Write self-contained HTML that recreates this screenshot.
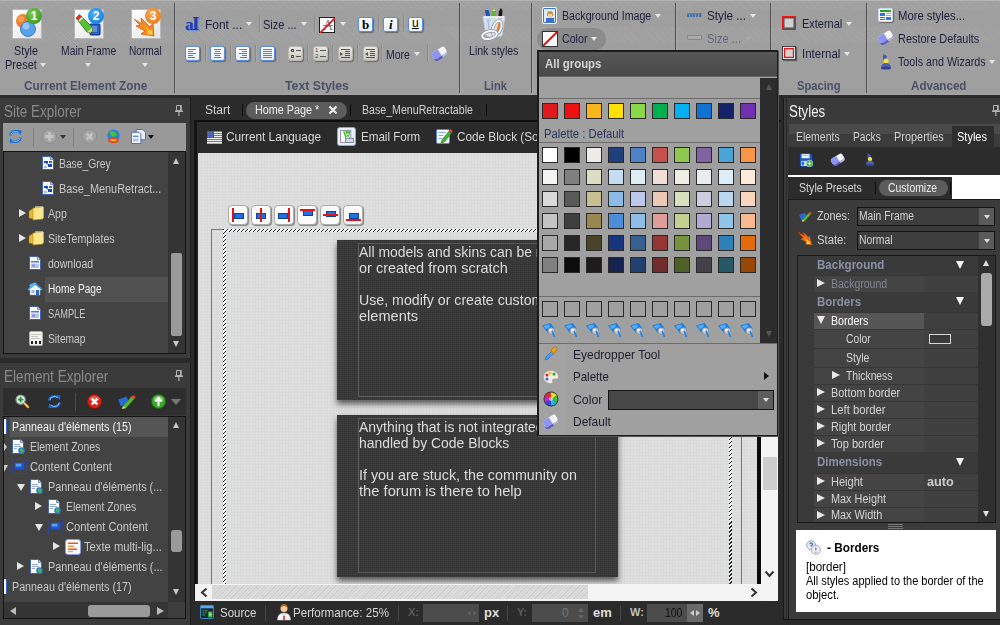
<!DOCTYPE html>
<html><head><meta charset="utf-8"><title>Styles</title>
<style>
*{box-sizing:border-box;margin:0;padding:0}
html,body{width:1000px;height:625px;overflow:hidden;background:#2a2a2a;font-family:"Liberation Sans",sans-serif;font-size:12px;color:#ddd}
.a{position:absolute}
.t{position:absolute;white-space:nowrap;line-height:1}
#ribbon{left:0;top:0;width:1000px;height:95px;background:#9f9f9f;box-shadow:inset 0 1px 0 #b4b4b4,inset 0 -1px 0 #a4a4a4}
.tex{position:absolute;left:0;width:1000px;background:repeating-linear-gradient(45deg,rgba(255,255,255,.06) 0 1px,transparent 1px 2.500px)}
#ribbon .t{color:#1d1f3c;font-size:12.5px}
#ribbon .g{color:#4a5068;font-weight:bold;font-size:12.5px;transform:scaleX(.93);transform-origin:0 0}
.vsep{position:absolute;top:3px;height:90px;width:1px;background:#505050;box-shadow:1px 0 0 rgba(255,255,255,.1)}
.dd{position:absolute;z-index:2;width:0;height:0;border-left:3.5px solid transparent;border-right:3.5px solid transparent;border-top:4px solid #e6e6e6}

.n{transform:scaleX(.87);transform-origin:0 0}
.tr{font-size:12.5px;color:#c8c8c8}
.tri-r{width:0;height:0;border-top:4.5px solid transparent;border-bottom:4.5px solid transparent;border-left:7px solid #e4e4e4}
.tri-l{width:0;height:0;border-top:4px solid transparent;border-bottom:4px solid transparent;border-right:6px solid #bbb}
.tri-u{width:0;height:0;border-left:3.5px solid transparent;border-right:3.5px solid transparent;border-bottom:6px solid #c8c8c8}
.tri-d{width:0;height:0;border-left:3.5px solid transparent;border-right:3.5px solid transparent;border-top:6px solid #c8c8c8}
.tri-dd{width:0;height:0;border-left:4.5px solid transparent;border-right:4.5px solid transparent;border-top:7px solid #e4e4e4}

.n2{transform:scaleX(.955);transform-origin:0 0}
.card{background:repeating-linear-gradient(0deg,rgba(255,255,255,.025) 0 1px,transparent 1px 2px),repeating-linear-gradient(90deg,rgba(255,255,255,.025) 0 1px,transparent 1px 2px),#343434;box-shadow:0 4px 6px rgba(0,0,0,.6)}
.ct{font-size:15px;color:#dcdcdc}
.sb{top:605px;width:1px;height:16px;background:#444}

.n3{transform:scaleX(.92);transform-origin:0 0}
.tb{font-size:12.5px;color:#d2d2d2}
.pg-h{font-size:12.5px;font-weight:bold;color:#8b91a6}
.pg-t{font-size:12.5px}
.tri-dw{width:0;height:0;margin-left:1px;border-left:4px solid transparent;border-right:4px solid transparent;border-top:8px solid #f4f4f4}
.tri-r2{width:0;height:0;border-top:4.5px solid transparent;border-bottom:4.5px solid transparent;border-left:8px solid #e8e8e8}
.tri-d2{width:0;height:0;border-left:4.5px solid transparent;border-right:4.5px solid transparent;border-top:8px solid #e8e8e8}
.sel{width:138px;height:19px;background:#3e3e3e;border:1px solid #141414}

.sw{width:16px;height:16px;border:1px solid #2a2a2a}
.hl{height:1px;background:#6c6c6c}
.mi{font-size:13.5px;color:#1c1c2c}

#ribbon .big{font-size:13px}
.dsep{width:1px;height:17px;background:#8a8a8a;box-shadow:1px 0 0 rgba(255,255,255,.12)}
.bigi{width:28px;height:28px;background:linear-gradient(135deg,#fff,#e4e4e4);box-shadow:0 0 0 1px rgba(255,255,255,.25)}
.badge{width:16px;height:16px;border-radius:8px;color:#fff;font-weight:bold;font-size:12px;text-align:center;line-height:16px}
</style></head><body>
<!-- RIBBON -->
<div id="ribbon" class="a">
<div class="tex" style="top:1px;height:9px"></div><div class="tex" style="top:27px;height:16px"></div><div class="vsep" style="left:174px"></div><div class="vsep" style="left:459px"></div><div class="vsep" style="left:531px"></div><div class="vsep" style="left:675px"></div><div class="vsep" style="left:770px"></div><div class="vsep" style="left:866px"></div><div class="a dsep" style="left:259px;top:15px"></div><div class="a dsep" style="left:314px;top:15px"></div><div class="a dsep" style="left:378px;top:15px"></div><div class="a dsep" style="left:403px;top:15px"></div><div class="a dsep" style="left:205px;top:45px"></div><div class="a dsep" style="left:230px;top:45px"></div><div class="a dsep" style="left:255px;top:45px"></div><div class="a dsep" style="left:307px;top:45px"></div><div class="a dsep" style="left:332px;top:45px"></div><div class="a dsep" style="left:357px;top:45px"></div><div class="a dsep" style="left:381px;top:45px"></div><div class="a dsep" style="left:427px;top:45px"></div>
<div class="a bigi" style="left:13px;top:10px"><svg width="28" height="28" viewBox="0 0 28 28"><circle cx="10" cy="11" r="7" fill="#f08030"/><circle cx="8" cy="9" r="3" fill="#f8a868" opacity=".7"/><circle cx="15" cy="19" r="7.500" fill="#58a0e8" stroke="#2868b8" stroke-width=".8"/><circle cx="13" cy="16" r="3.500" fill="#a8d0f8" opacity=".8"/></svg></div>
<div class="a badge" style="left:26px;top:8px;background:radial-gradient(circle at 40% 35%,#7ccc50,#2a8a18)">1</div>
<div class="a bigi" style="left:75px;top:10px"><svg width="28" height="28" viewBox="0 0 28 28"><rect x="15" y="14" width="10" height="11" rx="1" fill="#2a62c8" stroke="#0c2a80"/><rect x="17" y="16" width="5" height="6" fill="#5890e8"/><path d="M1 8l3.500-3.500 13 13-.5 5.500-5-1z" fill="#58c038" stroke="#2a7018" stroke-width=".8"/><path d="M1 8l3.500-3.500 2.500 2.500-3.500 3.500z" fill="#e83030"/><path d="M3.500 10.500l3.500-3.500 1 1-3.500 3.500z" fill="#f0f0f0"/><path d="M12 22l5 1 .5-5.500z" fill="#e8c890"/><path d="M15.500 22.700l1.500.3.200-1.600z" fill="#222"/></svg></div>
<div class="a badge" style="left:88px;top:8px;background:radial-gradient(circle at 40% 35%,#48b0f8,#0870d8)">2</div>
<div class="a bigi" style="left:132px;top:10px"><svg width="28" height="28" viewBox="0 0 28 28"><path d="M2 9l8 5-1-6 9 9 3-4 1 13-13-2 4-3-9-5 4-1z" fill="#f88820" stroke="#e05808" stroke-width=".8"/><path d="M12 15l6 6 2-2 .5 6-6-1 2-2z" fill="#ffd040"/></svg></div>
<div class="a badge" style="left:145px;top:8px;background:radial-gradient(circle at 40% 35%,#f8a850,#e87010)">3</div>
<div class="t n" style="left:14px;top:45px;font-size:12px;transform:scaleX(0.896);transform-origin:0 0">Style</div><div class="t n" style="left:5px;top:59px;font-size:12px;transform:scaleX(0.920);transform-origin:0 0">Preset</div><div class="t n" style="left:61px;top:45px;font-size:12px;transform:scaleX(0.863);transform-origin:0 0">Main Frame</div><div class="t n" style="left:129px;top:45px;font-size:12px;transform:scaleX(0.846);transform-origin:0 0">Normal</div><div class="t g" style="left:24px;top:80px;transform:scaleX(0.944);transform-origin:0 0">Current Element Zone</div><div class="dd" style="left:40px;top:63px"></div><div class="dd" style="left:85px;top:63px"></div><div class="dd" style="left:142px;top:63px"></div><div class="dd" style="left:246px;top:22px"></div><div class="dd" style="left:301px;top:22px"></div><div class="dd" style="left:340px;top:22px"></div><div class="dd" style="left:414px;top:52px"></div><div class="dd" style="left:655px;top:14px"></div><div class="dd" style="left:591px;top:37px"></div><div class="dd" style="left:750px;top:14px"></div><div class="dd" style="left:846px;top:22px"></div><div class="dd" style="left:844px;top:52px"></div><div class="dd" style="left:989px;top:60px"></div><div class="dd" style="left:745px;top:37px;border-top-color:#aaa"></div><div class="t" style="left:185px;top:14px;font-family:'Liberation Serif',serif;font-weight:bold;font-size:17px;color:#1a3cb0;letter-spacing:-1.500px;text-shadow:1px 1px 0 #6a8ad8">a<span style="font-size:19px">I</span></div><div class="t n big" style="left:205px;top:18px;transform:scaleX(0.920);transform-origin:0 0">Font ...</div><div class="t n big" style="left:263px;top:18px;transform:scaleX(0.845);transform-origin:0 0">Size ...</div><div class="a" style="left:319px;top:17px;width:16px;height:16px;background:#fff;border:1px solid #222"><div class="t" style="left:3px;top:1px;font-family:'Liberation Serif',serif;font-size:14px;color:#888;text-decoration:line-through">A</div><svg class="a" style="left:0;top:0" width="15" height="15"><path d="M0 15L15 0" stroke="#e81010" stroke-width="1.800"/></svg></div><div class="a" style="left:358px;top:17px;width:15px;height:15px;border:1px solid #5a8cdc;border-radius:2.500px;background:linear-gradient(#fff,#e8effa);box-shadow:1px 1px 1px rgba(0,0,0,.35)"><div class="t" style="left:3px;top:0;font-family:'Liberation Serif',serif;font-weight:bold;font-size:13px;color:#000">b</div></div><div class="a" style="left:383px;top:17px;width:15px;height:15px;border:1px solid #5a8cdc;border-radius:2.500px;background:linear-gradient(#fff,#e8effa);box-shadow:1px 1px 1px rgba(0,0,0,.35)"><div class="t" style="left:5px;top:0;font-family:'Liberation Serif',serif;font-style:italic;font-weight:bold;font-size:13px;color:#000">i</div></div><div class="a" style="left:408px;top:17px;width:15px;height:15px;border:1px solid #5a8cdc;border-radius:2.500px;background:linear-gradient(#fff,#e8effa);box-shadow:1px 1px 1px rgba(0,0,0,.35)"><div class="t" style="left:3px;top:-1px;font-size:12px;color:#000;text-decoration:underline">u</div></div><div class="a" style="left:185px;top:46px;width:15px;height:15px;border:1px solid #5a8cdc;border-radius:2.500px;background:linear-gradient(#fff,#e8effa);box-shadow:1px 1px 1px rgba(0,0,0,.35)"><div class="a" style="left:2px;top:2px;width:8px;height:1px;background:#7a7a7a"></div><div class="a" style="left:2px;top:4px;width:5px;height:1px;background:#7a7a7a"></div><div class="a" style="left:2px;top:6px;width:8px;height:1px;background:#7a7a7a"></div><div class="a" style="left:2px;top:8px;width:5px;height:1px;background:#7a7a7a"></div><div class="a" style="left:2px;top:10px;width:7px;height:1px;background:#7a7a7a"></div></div><div class="a" style="left:210px;top:46px;width:15px;height:15px;border:1px solid #5a8cdc;border-radius:2.500px;background:linear-gradient(#fff,#e8effa);box-shadow:1px 1px 1px rgba(0,0,0,.35)"><div class="a" style="left:3px;top:2px;width:7px;height:1px;background:#7a7a7a"></div><div class="a" style="left:4px;top:4px;width:5px;height:1px;background:#7a7a7a"></div><div class="a" style="left:3px;top:6px;width:7px;height:1px;background:#7a7a7a"></div><div class="a" style="left:4px;top:8px;width:5px;height:1px;background:#7a7a7a"></div><div class="a" style="left:3px;top:10px;width:7px;height:1px;background:#7a7a7a"></div></div><div class="a" style="left:235px;top:46px;width:15px;height:15px;border:1px solid #5a8cdc;border-radius:2.500px;background:linear-gradient(#fff,#e8effa);box-shadow:1px 1px 1px rgba(0,0,0,.35)"><div class="a" style="left:3px;top:2px;width:8px;height:1px;background:#7a7a7a"></div><div class="a" style="left:6px;top:4px;width:5px;height:1px;background:#7a7a7a"></div><div class="a" style="left:3px;top:6px;width:8px;height:1px;background:#7a7a7a"></div><div class="a" style="left:6px;top:8px;width:5px;height:1px;background:#7a7a7a"></div><div class="a" style="left:4px;top:10px;width:7px;height:1px;background:#7a7a7a"></div></div><div class="a" style="left:260px;top:46px;width:15px;height:15px;border:1px solid #5a8cdc;border-radius:2.500px;background:linear-gradient(#fff,#e8effa);box-shadow:1px 1px 1px rgba(0,0,0,.35)"><div class="a" style="left:2px;top:2px;width:9px;height:1px;background:#7a7a7a"></div><div class="a" style="left:2px;top:4px;width:9px;height:1px;background:#7a7a7a"></div><div class="a" style="left:2px;top:6px;width:9px;height:1px;background:#7a7a7a"></div><div class="a" style="left:2px;top:8px;width:9px;height:1px;background:#7a7a7a"></div><div class="a" style="left:2px;top:10px;width:9px;height:1px;background:#7a7a7a"></div></div><div class="a" style="left:288px;top:46px;width:15px;height:15px;border:1px solid #b8b8b0;border-radius:3px;background:linear-gradient(#e8e8e0,#c8c8c0);box-shadow:1px 1px 1px rgba(0,0,0,.35)"><div class="a" style="left:2px;top:2px;width:3px;height:3px;border:1px solid #555"></div><div class="a" style="left:2px;top:8px;width:3px;height:3px;border:1px solid #555"></div><div class="a" style="left:7px;top:3px;width:5px;height:1px;background:#555"></div><div class="a" style="left:7px;top:9px;width:5px;height:1px;background:#555"></div></div><div class="a" style="left:313px;top:46px;width:15px;height:15px;border:1px solid #b8b8b0;border-radius:3px;background:linear-gradient(#e8e8e0,#c8c8c0);box-shadow:1px 1px 1px rgba(0,0,0,.35)"><div class="t" style="left:1px;top:0;font-size:6px;color:#444;line-height:6px">1<br>2</div><div class="a" style="left:6px;top:3px;width:6px;height:1px;background:#555"></div><div class="a" style="left:6px;top:9px;width:6px;height:1px;background:#555"></div></div><div class="a" style="left:338px;top:46px;width:15px;height:15px;border:1px solid #b8b8b0;border-radius:3px;background:linear-gradient(#e8e8e0,#c8c8c0);box-shadow:1px 1px 1px rgba(0,0,0,.35)"><div class="a" style="left:2px;top:2px;width:9px;height:1px;background:#555"></div><div class="a" style="left:6px;top:4px;width:5px;height:1px;background:#555"></div><div class="a" style="left:6px;top:6px;width:5px;height:1px;background:#555"></div><div class="a" style="left:6px;top:8px;width:5px;height:1px;background:#555"></div><div class="a" style="left:2px;top:10px;width:9px;height:1px;background:#555"></div><div class="a" style="left:1px;top:5px;width:0;height:0;border-top:2px solid transparent;border-bottom:2px solid transparent;border-left:3px solid #555"></div></div><div class="a" style="left:363px;top:46px;width:15px;height:15px;border:1px solid #b8b8b0;border-radius:3px;background:linear-gradient(#e8e8e0,#c8c8c0);box-shadow:1px 1px 1px rgba(0,0,0,.35)"><div class="a" style="left:2px;top:2px;width:9px;height:1px;background:#555"></div><div class="a" style="left:6px;top:4px;width:5px;height:1px;background:#555"></div><div class="a" style="left:6px;top:6px;width:5px;height:1px;background:#555"></div><div class="a" style="left:6px;top:8px;width:5px;height:1px;background:#555"></div><div class="a" style="left:2px;top:10px;width:9px;height:1px;background:#555"></div><div class="a" style="left:1px;top:5px;width:0;height:0;border-top:2px solid transparent;border-bottom:2px solid transparent;border-right:3px solid #555"></div></div><div class="t n big" style="left:386px;top:48px;transform:scaleX(0.807);transform-origin:0 0">More</div><svg class="a" style="left:431px;top:46px" width="18" height="16"><use href="#eraser"/></svg><div class="t g" style="left:285px;top:80px;transform:scaleX(0.982);transform-origin:0 0">Text Styles</div><svg class="a" style="left:480px;top:7px" width="28" height="34" viewBox="0 0 28 34"><path d="M5 3l2-2 2 3 2 10-4 1z" fill="#2050b8"/><path d="M5 3l2-2 1.500 2z" fill="#a0c0f0"/><path d="M12 4l2-3 2 3 0 12-4 0z" fill="#58b830"/><path d="M12.500 4l1.500-2.500 1.500 2.500z" fill="#f0d0a0"/><path d="M19 4l2-3 1.500 3-1 9-3.500-1z" fill="#181818"/><path d="M3 9.500h22l-3 19c-3 2-13 2-16 0z" fill="#e8eef8" fill-opacity=".82" stroke="#c8d0e0" stroke-width=".8"/><path d="M4 10h20" stroke="#fff" stroke-width="1.200"/><path d="M20 14l-3 12" stroke="#e87818" stroke-width="2.200"/><path d="M8 13l1 9" stroke="#78a8e8" stroke-width="1.500" opacity=".6"/><ellipse cx="17" cy="21" rx="4" ry="7.500" transform="rotate(22 17 21)" fill="none" stroke="#8c94a0" stroke-width="3.400"/><ellipse cx="17" cy="21" rx="4" ry="7.500" transform="rotate(22 17 21)" fill="none" stroke="#f0f2f6" stroke-width="2"/><ellipse cx="9.500" cy="28" rx="7.500" ry="3.800" transform="rotate(-12 9.500 28)" fill="none" stroke="#8c94a0" stroke-width="3.400"/><ellipse cx="9.500" cy="28" rx="7.500" ry="3.800" transform="rotate(-12 9.500 28)" fill="none" stroke="#f4f6fa" stroke-width="2"/></svg><div class="t n" style="left:469px;top:45px;font-size:12px;transform:scaleX(0.882);transform-origin:0 0">Link styles</div><div class="t g" style="left:484px;top:80px;transform:scaleX(0.892);transform-origin:0 0">Link</div><div class="a" style="left:537px;top:28px;width:69px;height:22px;border-radius:11px;background:#8b8b8b"></div><div class="a" style="left:543px;top:8px;width:13px;height:15px;background:#dcecfc;border:1px solid #3a78d0;border-radius:1px;box-shadow:0 0 0 1px #f4f4f4"><div class="a" style="left:3px;top:2px;width:6px;height:5px;border-radius:3px 3px 0 0;background:#d89030"></div><div class="a" style="left:4px;top:5px;width:4px;height:4px;background:#f8d0a8"></div><div class="a" style="left:2px;top:9px;width:8px;height:4px;background:#3a70c8"></div></div><div class="a" style="left:542px;top:31px;width:16px;height:16px;background:#fff;border:1px solid #333"><svg class="a" style="left:0;top:0" width="14" height="14"><path d="M0 14L14 0" stroke="#e81010" stroke-width="2"/></svg></div><div class="t n big" style="left:562px;top:9px;transform:scaleX(0.818);transform-origin:0 0">Background Image</div><div class="t n big" style="left:562px;top:32px;transform:scaleX(0.819);transform-origin:0 0">Color</div><div class="a" style="left:687px;top:13px;width:15px;height:4px;background:repeating-linear-gradient(90deg,#4a70a8 0 2px,#8098b8 2px 3px);border-top:1px solid #5a80b0"></div><div class="a" style="left:687px;top:35px;width:15px;height:5px;background:#aaa;border:1px solid #888;border-radius:1px"></div><div class="t n big" style="left:707px;top:9px;transform:scaleX(0.902);transform-origin:0 0">Style ...</div><div class="t n big" style="left:707px;top:32px;color:#62667a;transform:scaleX(0.855);transform-origin:0 0">Size ...</div><div class="a" style="left:782px;top:16px;width:14px;height:14px;border:1.500px solid #e81818;background:#d0d0d0;box-shadow:inset 0 0 0 1.500px #555"></div><div class="a" style="left:782px;top:46px;width:14px;height:14px;border:1px solid #444;background:#d4d4d4;box-shadow:inset 0 0 0 1px #e0e0e0,inset 0 0 0 2.200px #e81818,1px 1px 1px rgba(0,0,0,.4)"></div><div class="t n big" style="left:802px;top:17px;transform:scaleX(0.842);transform-origin:0 0">External</div><div class="t n big" style="left:802px;top:47px;transform:scaleX(0.884);transform-origin:0 0">Internal</div><div class="t g" style="left:797px;top:80px;transform:scaleX(0.894);transform-origin:0 0">Spacing</div><div class="a" style="left:878px;top:8px;width:15px;height:14px;background:#fff;border:1px solid #d0d8e8;border-radius:2px;box-shadow:1px 1px 1px rgba(0,0,0,.35)"><div class="a" style="left:1px;top:1px;width:11px;height:2px;background:#28a028"></div><div class="a" style="left:1px;top:4px;width:5px;height:3px;background:#2878e0"></div><div class="a" style="left:7px;top:4px;width:5px;height:1px;background:#f0a020;box-shadow:0 2px 0 #f0a020"></div><div class="a" style="left:1px;top:8px;width:5px;height:1px;background:#e82020;box-shadow:0 2px 0 #e82020"></div><div class="a" style="left:7px;top:8px;width:5px;height:3px;background:#2878e0"></div></div><svg class="a" style="left:877px;top:30px" width="18" height="16"><use href="#eraser"/></svg><svg class="a" style="left:880px;top:53px" width="12" height="17" viewBox="0 0 12 17"><path d="M3 1l4 2-1 5-3 0z" fill="#4858b8"/><circle cx="6" cy="8" r="2.600" fill="#f8e040"/><path d="M1 15c0-4 3-5 5-5s5 1 5 5z" fill="#5060b8"/><ellipse cx="6" cy="15" rx="5" ry="1.500" fill="#38408a"/></svg><div class="t n big" style="left:898px;top:9px;transform:scaleX(0.868);transform-origin:0 0">More styles...</div><div class="t n big" style="left:898px;top:32px;transform:scaleX(0.840);transform-origin:0 0">Restore Defaults</div><div class="t n big" style="left:898px;top:55px;transform:scaleX(0.825);transform-origin:0 0">Tools and Wizards</div><div class="t g" style="left:911px;top:80px;transform:scaleX(0.928);transform-origin:0 0">Advanced</div></div>
<!-- LEFT -->
<div id="left">
<div class="a" style="left:0;top:98px;width:191px;height:260px;background:#3b3b3b;border-right:1px solid #1e1e1e"></div>
<div class="t n" style="left:4px;top:104px;font-size:16px;color:#8a8a8a;transform:scaleX(0.843);transform-origin:0 0">Site Explorer</div>
<svg class="a" style="left:175px;top:105px" width="8" height="11" viewBox="0 0 8 11"><path d="M1.500 .5h4.500v5h-4.500z" fill="none" stroke="#b4b4b4"/><rect x="5" y="0" width="1.500" height="6" fill="#b4b4b4"/><rect x="0" y="5.500" width="8" height="1.500" fill="#b4b4b4"/><rect x="3.300" y="7" width="1.200" height="4" fill="#b4b4b4"/></svg>
<div class="a" style="left:3px;top:123px;width:183px;height:28px;background:#999"></div>
<div class="a" style="left:33px;top:128px;width:1px;height:18px;background:#7d7d7d"></div>
<div class="a" style="left:73px;top:128px;width:1px;height:18px;background:#7d7d7d"></div>
<div class="a" style="left:3px;top:151px;width:183px;height:203px;background:#434343;border:1px solid #141414"></div>
<div class="a" style="left:168px;top:152px;width:17px;height:201px;background:#343434"></div>
<div class="a" style="left:171px;top:253px;width:11px;height:83px;background:#9a9a9a;border-radius:2px"></div>
<div class="a tri-u" style="left:173px;top:158px"></div>
<div class="a tri-d" style="left:173px;top:341px"></div>
<div class="a" style="left:45px;top:277px;width:123px;height:25px;background:#515151"></div>
<div class="t n tr" style="left:59px;top:158px;transform:scaleX(0.825);transform-origin:0 0">Base_Grey</div>
<div class="t n tr" style="left:59px;top:183px;transform:scaleX(0.872);transform-origin:0 0">Base_MenuRetract...</div>
<div class="t n tr" style="left:48px;top:208px;transform:scaleX(0.845);transform-origin:0 0">App</div>
<div class="t n tr" style="left:48px;top:233px;transform:scaleX(0.848);transform-origin:0 0">SiteTemplates</div>
<div class="t n tr" style="left:48px;top:258px;transform:scaleX(0.844);transform-origin:0 0">download</div>
<div class="t n tr" style="left:48px;top:283px;color:#f0f0f0;transform:scaleX(0.812);transform-origin:0 0">Home Page</div>
<div class="t n tr" style="left:48px;top:308px;transform:scaleX(0.737);transform-origin:0 0">SAMPLE</div>
<div class="t n tr" style="left:48px;top:333px;transform:scaleX(0.817);transform-origin:0 0">Sitemap</div>
<div class="a tri-r" style="left:19px;top:209px"></div>
<div class="a tri-r" style="left:19px;top:234px"></div>

<div class="a" style="left:0;top:363px;width:191px;height:262px;background:#3b3b3b;border-right:1px solid #1e1e1e"></div>
<div class="t n" style="left:4px;top:369px;font-size:16px;color:#8a8a8a;transform:scaleX(0.850);transform-origin:0 0">Element Explorer</div>
<svg class="a" style="left:175px;top:370px" width="8" height="11" viewBox="0 0 8 11"><path d="M1.500 .5h4.500v5h-4.500z" fill="none" stroke="#b4b4b4"/><rect x="5" y="0" width="1.500" height="6" fill="#b4b4b4"/><rect x="0" y="5.500" width="8" height="1.500" fill="#b4b4b4"/><rect x="3.300" y="7" width="1.200" height="4" fill="#b4b4b4"/></svg>
<div class="a" style="left:3px;top:388px;width:183px;height:27px;background:#2e2e2e"></div>
<div class="a" style="left:75px;top:393px;width:1px;height:18px;background:#4a4a4a"></div>
<div class="a" style="left:3px;top:416px;width:183px;height:203px;background:#434343;border:1px solid #141414"></div>
<div class="a" style="left:168px;top:417px;width:17px;height:185px;background:#343434"></div>
<div class="a" style="left:4px;top:602px;width:164px;height:16px;background:#353535"></div>
<div class="a" style="left:168px;top:602px;width:17px;height:16px;background:#3e3e3e"></div>
<div class="a" style="left:88px;top:605px;width:62px;height:12px;background:#9a9a9a;border-radius:3px"></div>
<div class="a" style="left:171px;top:530px;width:11px;height:22px;background:#9a9a9a;border-radius:3px"></div>
<div class="a tri-u" style="left:173px;top:422px"></div>
<div class="a tri-d" style="left:173px;top:589px"></div>
<div class="a tri-l" style="left:10px;top:607px"></div>
<div class="a tri-r" style="left:157px;top:607px;border-left-color:#bbb"></div>
<div class="a" style="left:10px;top:417px;width:158px;height:20px;background:#555"></div>
<div class="t n tr" style="left:12px;top:421px;color:#f0f0f0;transform:scaleX(0.858);transform-origin:0 0">Panneau d'éléments (15)</div>
<div class="t n tr" style="left:30px;top:441px;transform:scaleX(0.836);transform-origin:0 0">Element Zones</div>
<div class="t n tr" style="left:30px;top:461px;transform:scaleX(0.899);transform-origin:0 0">Content Content</div>
<div class="t n tr" style="left:48px;top:481px;transform:scaleX(0.868);transform-origin:0 0">Panneau d'éléments (...</div>
<div class="t n tr" style="left:66px;top:501px;transform:scaleX(0.836);transform-origin:0 0">Element Zones</div>
<div class="t n tr" style="left:66px;top:521px;transform:scaleX(0.899);transform-origin:0 0">Content Content</div>
<div class="t n tr" style="left:84px;top:541px;transform:scaleX(0.897);transform-origin:0 0">Texte multi-lig...</div>
<div class="t n tr" style="left:48px;top:561px">Panneau d'éléments (...</div>
<div class="t n tr" style="left:12px;top:581px;transform:scaleX(0.858);transform-origin:0 0">Panneau d'éléments (17)</div>
<div class="a tri-dd" style="left:17px;top:484px"></div>
<div class="a tri-r" style="left:35px;top:502px"></div>
<div class="a tri-dd" style="left:35px;top:524px"></div>
<div class="a tri-r" style="left:53px;top:542px"></div>
<div class="a tri-r" style="left:17px;top:562px"></div>
<svg class="a" style="left:8px;top:129px" width="15" height="15" viewBox="0 0 16 16"><use href="#refresh" width="16" height="16"/></svg><svg class="a" style="left:42px;top:129px" width="15" height="15" viewBox="0 0 16 16"><use href="#plusg" width="16" height="16"/></svg><svg class="a" style="left:82px;top:129px" width="15" height="15" viewBox="0 0 16 16"><use href="#xg" width="16" height="16"/></svg><svg class="a" style="left:106px;top:129px" width="15" height="15" viewBox="0 0 16 16"><use href="#globe" width="16" height="16"/></svg><svg class="a" style="left:131px;top:129px" width="15" height="15"><use href="#copy"/></svg><div class="a" style="left:60px;top:135px;width:0;height:0;border-left:3px solid transparent;border-right:3px solid transparent;border-top:4px solid #333"></div><div class="a" style="left:148px;top:135px;width:0;height:0;border-left:3px solid transparent;border-right:3px solid transparent;border-top:4px solid #111"></div><svg class="a" style="left:42px;top:156px" width="12" height="14"><use href="#pgm"/></svg><svg class="a" style="left:42px;top:181px" width="12" height="14"><use href="#pgm"/></svg><svg class="a" style="left:28px;top:206px" width="17" height="15"><use href="#folder"/></svg><svg class="a" style="left:28px;top:231px" width="17" height="15"><use href="#folder"/></svg><svg class="a" style="left:29px;top:256px" width="12" height="14"><use href="#pgd"/></svg><svg class="a" style="left:27px;top:282px" width="16" height="14"><use href="#home"/></svg><svg class="a" style="left:29px;top:306px" width="12" height="14"><use href="#pgd"/></svg><svg class="a" style="left:29px;top:331px" width="14" height="15"><use href="#smap"/></svg><svg class="a" style="left:15px;top:394px" width="15" height="15" viewBox="0 0 16 16"><use href="#zoomi" width="16" height="16"/></svg><svg class="a" style="left:47px;top:394px" width="15" height="15" viewBox="0 0 16 16"><use href="#refresh" width="16" height="16"/></svg><svg class="a" style="left:87px;top:394px" width="15" height="15" viewBox="0 0 16 16"><use href="#xr" width="16" height="16"/></svg><svg class="a" style="left:118px;top:393px" width="18" height="16"><use href="#pencilz"/></svg><svg class="a" style="left:151px;top:394px" width="15" height="15" viewBox="0 0 16 16"><use href="#upg" width="16" height="16"/></svg><div class="a" style="left:171px;top:399px;width:0;height:0;border-left:5px solid transparent;border-right:5px solid transparent;border-top:6px solid #777"></div><div class="a" style="left:4px;top:419px;width:3px;height:15px;background:#f0f4ff;border-right:1px solid #3060c0"></div><div class="a" style="left:4px;top:579px;width:3px;height:15px;background:#f0f4ff;border-right:1px solid #3060c0"></div><svg class="a" style="left:12px;top:439px" width="14" height="16"><use href="#pgg"/></svg><svg class="a" style="left:12px;top:459px" width="15" height="15"><use href="#zone"/></svg><svg class="a" style="left:30px;top:479px" width="14" height="16"><use href="#pgg"/></svg><svg class="a" style="left:48px;top:499px" width="14" height="16"><use href="#pgg"/></svg><svg class="a" style="left:48px;top:519px" width="15" height="15"><use href="#zone"/></svg><svg class="a" style="left:65px;top:539px" width="16" height="16"><use href="#txt"/></svg><svg class="a" style="left:30px;top:559px" width="14" height="16"><use href="#pgg"/></svg><div class="a tri-r" style="left:4px;top:443px;border-left-width:3px;border-left-color:#ccc"></div><div class="a tri-dd" style="left:4px;top:465px;border-left-width:0;border-right-width:4px;border-top-color:#ccc"></div></div>
<!-- CENTER -->
<div id="center">
<div class="a" style="left:191px;top:95px;width:590px;height:530px;background:#2b2b2b"></div>
<div class="a" style="left:246px;top:102px;width:101px;height:17px;background:#5c5c5c;border-radius:9px"></div>
<div class="a" style="left:242px;top:104px;width:1px;height:12px;background:#0e0e0e"></div>
<div class="a" style="left:350px;top:104px;width:1px;height:12px;background:#0e0e0e"></div>
<div class="a" style="left:486px;top:104px;width:1px;height:12px;background:#0e0e0e"></div>
<div class="t n" style="left:205px;top:104px;font-size:12.5px;color:#d0d0d0;transform:scaleX(0.962);transform-origin:0 0">Start</div>
<div class="t n" style="left:255px;top:104px;font-size:12.5px;color:#eee;transform:scaleX(0.865);transform-origin:0 0">Home Page *</div>
<div class="t n" style="left:362px;top:104px;font-size:12.5px;color:#d0d0d0;transform:scaleX(0.849);transform-origin:0 0">Base_MenuRetractable</div>
<svg class="a" style="left:328px;top:105px" width="10" height="10" viewBox="0 0 10 10"><path d="M1.5 1.5l7 7M8.5 1.5l-7 7" stroke="#eee" stroke-width="2.2"/></svg>
<div class="a" style="left:194px;top:120px;width:587px;height:2px;background:#0e0e0e"></div>
<div class="a" style="left:194px;top:121px;width:3px;height:480px;background:#141414"></div>
<div class="t n" style="left:226px;top:130px;font-size:13.5px;color:#d8d8d8;transform:scaleX(0.873);transform-origin:0 0">Current Language</div>
<div class="t n" style="left:361px;top:130px;font-size:13.5px;color:#d8d8d8;transform:scaleX(0.859);transform-origin:0 0">Email Form</div>
<div class="t n" style="left:457px;top:130px;font-size:13.5px;color:#d8d8d8">Code Block (So</div>
<!-- canvas -->
<div class="a" id="canvas" style="left:198px;top:153px;width:559px;height:432px;background:repeating-linear-gradient(0deg,rgba(0,0,0,.018) 0 1px,transparent 1px 3px),repeating-linear-gradient(90deg,rgba(0,0,0,.018) 0 1px,transparent 1px 3px),#dfdfdf;overflow:hidden">
 <div class="a" style="left:13px;top:76px;width:600px;height:400px;border-left:1px solid #777;border-top:1px solid #777"></div>
 <div class="a" style="left:25px;top:76px;width:509px;height:360px;border:3px solid transparent;border-bottom:0;background:repeating-linear-gradient(135deg,#222 0 1.100px,#eaf6fa 1.100px 2.830px) border-box;-webkit-mask:linear-gradient(#000 0 0) padding-box exclude,linear-gradient(#000 0 0);mask:linear-gradient(#000 0 0) padding-box exclude,linear-gradient(#000 0 0)"></div>
 <div class="a" style="left:543px;top:79px;width:1px;height:360px;background:#777"></div>
 <div class="a card" style="left:139px;top:87px;width:281px;height:160px"><div class="a" style="left:21px;top:3px;width:238px;height:154px;border:1px solid #5a5a5a"></div>
  <div class="t n2 ct" style="left:22px;top:4px;transform:scaleX(.93);transform-origin:0 0">All models and skins can be modified</div>
  <div class="t n2 ct" style="left:22px;top:20px;transform:scaleX(0.965);transform-origin:0 0">or created from scratch</div>
  <div class="t n2 ct" style="left:22px;top:52px;transform:scaleX(.945);transform-origin:0 0">Use, modify or create custom</div>
  <div class="t n2 ct" style="left:22px;top:68px;transform:scaleX(0.972);transform-origin:0 0">elements</div>
 </div>
 <div class="a card" style="left:139px;top:262px;width:281px;height:162px"><div class="a" style="left:21px;top:3px;width:238px;height:155px;border:1px solid #5a5a5a"></div>
  <div class="t n2 ct" style="left:22px;top:4px;transform:scaleX(.93);transform-origin:0 0">Anything that is not integrated can be</div>
  <div class="t n2 ct" style="left:22px;top:20px;transform:scaleX(0.929);transform-origin:0 0">handled by Code Blocks</div>
  <div class="t n2 ct" style="left:22px;top:52px;transform:scaleX(0.954);transform-origin:0 0">If you are stuck, the community on</div>
  <div class="t n2 ct" style="left:22px;top:68px;transform:scaleX(0.981);transform-origin:0 0">the forum is there to help</div>
 </div>
</div>
<div class="a" style="left:757px;top:153px;width:4px;height:432px;background:#0c0c0c"></div>
<div class="a" style="left:761px;top:153px;width:17px;height:448px;background:#f4f4f4"></div>
<div class="a" style="left:763px;top:457px;width:14px;height:33px;background:#cdcdcd"></div>
<div class="a" style="left:195px;top:584px;width:566px;height:17px;background:#f3f3f3"></div>
<div class="a" style="left:212px;top:585px;width:376px;height:14px;background:repeating-linear-gradient(135deg,#d0d0d0 0 1px,#dcdcdc 1px 2.500px)"></div>
<svg class="a" style="left:200px;top:587px" width="8" height="11" viewBox="0 0 8 11"><path d="M6.5 1.5L2 5.5l4.500 4" fill="none" stroke="#333" stroke-width="2"/></svg>
<svg class="a" style="left:750px;top:587px" width="8" height="11" viewBox="0 0 8 11"><path d="M1.5 1.5L6 5.5l-4.500 4" fill="none" stroke="#333" stroke-width="2"/></svg>
<svg class="a" style="left:764px;top:570px" width="11" height="8" viewBox="0 0 11 8"><path d="M1.500 1.500L5.500 6l4-4.500" fill="none" stroke="#333" stroke-width="2"/></svg>
<!-- status -->
<div class="t n" style="left:220px;top:606px;font-size:13.5px;color:#d8d8d8;transform:scaleX(0.851);transform-origin:0 0">Source</div>
<div class="t n" style="left:293px;top:606px;font-size:13.5px;color:#d8d8d8;transform:scaleX(0.858);transform-origin:0 0">Performance: 25%</div>
<div class="a sb" style="left:265px"></div><div class="a sb" style="left:398px"></div><div class="a sb" style="left:507px"></div><div class="a sb" style="left:620px"></div>
<div class="t" style="left:408px;top:607px;font-size:11px;font-weight:bold;color:#5a5a5a">X:</div>
<div class="a" style="left:423px;top:604px;width:56px;height:18px;background:#4c4c4c"></div>
<div class="t" style="left:484px;top:606px;font-size:13px;font-weight:bold;color:#ddd">px</div>
<div class="t" style="left:517px;top:607px;font-size:11px;font-weight:bold;color:#5a5a5a">Y:</div>
<div class="a" style="left:532px;top:604px;width:56px;height:18px;background:#4c4c4c"></div>
<div class="t" style="left:562px;top:607px;font-size:12px;color:#777">0</div>
<div class="t" style="left:593px;top:606px;font-size:13px;font-weight:bold;color:#ddd">em</div>
<div class="t" style="left:630px;top:607px;font-size:11px;font-weight:bold;color:#c0c0c0">W:</div>
<div class="a" style="left:647px;top:604px;width:56px;height:18px;background:#4c4c4c"></div>
<div class="a" style="left:687px;top:604px;width:16px;height:18px;background:#6a6a6a"></div>
<div class="t n" style="left:665px;top:607px;font-size:12px;color:#111">100</div>
<div class="t" style="left:708px;top:606px;font-size:13px;font-weight:bold;color:#ddd">%</div>
<svg class="a" style="left:207px;top:131px" width="15" height="13" viewBox="0 0 17 13" preserveAspectRatio="none"><use href="#flag" width="17" height="13"/></svg><svg class="a" style="left:337px;top:127px" width="19" height="19"><use href="#mailf"/></svg><svg class="a" style="left:436px;top:128px" width="17" height="16"><use href="#code"/></svg><svg class="a" style="left:200px;top:605px" width="14" height="14"><use href="#src"/></svg><svg class="a" style="left:277px;top:604px" width="14" height="17"><use href="#perf"/></svg><div class="a" style="left:228px;top:205px;width:20px;height:20px;background:#fbfbfb;border:1px solid #aaa;border-radius:4px;box-shadow:1px 1px 1px rgba(0,0,0,.4)"><div class="a" style="left:5px;top:7px;width:10px;height:6px;background:#2070e0;border:1px solid #1040a0"></div><div class="a" style="left:3px;top:2px;width:2px;height:14px;background:#e81010"></div></div><div class="a" style="left:251px;top:205px;width:20px;height:20px;background:#fbfbfb;border:1px solid #aaa;border-radius:4px;box-shadow:1px 1px 1px rgba(0,0,0,.4)"><div class="a" style="left:4px;top:7px;width:10px;height:6px;background:#2070e0;border:1px solid #1040a0"></div><div class="a" style="left:8px;top:2px;width:2px;height:14px;background:#e81010"></div></div><div class="a" style="left:274px;top:205px;width:20px;height:20px;background:#fbfbfb;border:1px solid #aaa;border-radius:4px;box-shadow:1px 1px 1px rgba(0,0,0,.4)"><div class="a" style="left:3px;top:7px;width:10px;height:6px;background:#2070e0;border:1px solid #1040a0"></div><div class="a" style="left:13px;top:2px;width:2px;height:14px;background:#e81010"></div></div><div class="a" style="left:297px;top:205px;width:20px;height:20px;background:#fbfbfb;border:1px solid #aaa;border-radius:4px;box-shadow:1px 1px 1px rgba(0,0,0,.4)"><div class="a" style="left:5px;top:4px;width:10px;height:6px;background:#2070e0;border:1px solid #1040a0"></div><div class="a" style="left:2px;top:3px;width:15px;height:2px;background:#e81010"></div></div><div class="a" style="left:320px;top:205px;width:20px;height:20px;background:#fbfbfb;border:1px solid #aaa;border-radius:4px;box-shadow:1px 1px 1px rgba(0,0,0,.4)"><div class="a" style="left:5px;top:5px;width:10px;height:6px;background:#2070e0;border:1px solid #1040a0"></div><div class="a" style="left:2px;top:8px;width:15px;height:2px;background:#e81010"></div></div><div class="a" style="left:343px;top:205px;width:20px;height:20px;background:#fbfbfb;border:1px solid #aaa;border-radius:4px;box-shadow:1px 1px 1px rgba(0,0,0,.4)"><div class="a" style="left:5px;top:7px;width:10px;height:6px;background:#2070e0;border:1px solid #1040a0"></div><div class="a" style="left:2px;top:13px;width:15px;height:2px;background:#e81010"></div></div><div class="a" style="left:578px;top:608px;width:0;height:0;border-left:3px solid transparent;border-right:3px solid transparent;border-bottom:4px solid #666"></div><div class="a" style="left:578px;top:615px;width:0;height:0;border-left:3px solid transparent;border-right:3px solid transparent;border-top:4px solid #666"></div><div class="a" style="left:690px;top:610px;width:0;height:0;border-top:3px solid transparent;border-bottom:3px solid transparent;border-right:4px solid #ccc"></div><div class="a" style="left:696px;top:610px;width:0;height:0;border-top:3px solid transparent;border-bottom:3px solid transparent;border-left:4px solid #ccc"></div><div class="a" style="left:467px;top:610px;width:0;height:0;border-top:3px solid transparent;border-bottom:3px solid transparent;border-right:4px solid #5c5c5c"></div><div class="a" style="left:473px;top:610px;width:0;height:0;border-top:3px solid transparent;border-bottom:3px solid transparent;border-left:4px solid #5c5c5c"></div></div>
<!-- RIGHT -->
<div id="right">
<div class="a" style="left:783px;top:98px;width:217px;height:527px;background:#3a3a3a;border-left:1px solid #1a1a1a"></div>
<div class="a" style="left:786px;top:98px;width:1px;height:522px;background:#2a2a2a"></div>
<div class="t n" style="left:789px;top:104px;font-size:16px;color:#f0f0f0;transform:scaleX(0.832);transform-origin:0 0">Styles</div>
<svg class="a" style="left:992px;top:105px" width="8" height="11" viewBox="0 0 8 11"><path d="M1.500 .5h4.500v5h-4.500z" fill="none" stroke="#b4b4b4"/><rect x="5" y="0" width="1.500" height="6" fill="#b4b4b4"/><rect x="0" y="5.500" width="8" height="1.500" fill="#b4b4b4"/><rect x="3.300" y="7" width="1.200" height="4" fill="#b4b4b4"/></svg>
<div class="a" style="left:789px;top:124px;width:211px;height:23px;background:linear-gradient(#4a4a4a 0 42%,#3c3c3c 42%)"></div>
<div class="a" style="left:952px;top:126px;width:42px;height:21px;background:#2e2e2e"></div>
<div class="t n tb" style="left:796px;top:131px;transform:scaleX(0.837);transform-origin:0 0">Elements</div>
<div class="t n tb" style="left:853px;top:131px;transform:scaleX(0.815);transform-origin:0 0">Packs</div>
<div class="t n tb" style="left:894px;top:131px;transform:scaleX(0.874);transform-origin:0 0">Properties</div>
<div class="t n tb" style="left:957px;top:131px;color:#fff;transform:scaleX(0.879);transform-origin:0 0">Styles</div>
<div class="a" style="left:788px;top:147px;width:212px;height:28px;background:#2c2c2c"></div>
<div class="a" style="left:788px;top:175px;width:212px;height:24px;background:#fff"></div>
<div class="a" style="left:788px;top:177px;width:164px;height:22px;background:#2c2c2c"></div>
<div class="a" style="left:879px;top:180px;width:69px;height:16px;background:#5c5c5c;border-radius:8px"></div>
<div class="a" style="left:875px;top:182px;width:1px;height:12px;background:#0e0e0e"></div>
<div class="a" style="left:950px;top:182px;width:1px;height:12px;background:#0e0e0e"></div>
<div class="t n tb" style="left:799px;top:182px;transform:scaleX(0.854);transform-origin:0 0">Style Presets</div>
<div class="t n tb" style="left:888px;top:182px;color:#f0f0f0;transform:scaleX(0.832);transform-origin:0 0">Customize</div>
<div class="a" style="left:788px;top:199px;width:212px;height:421px;background:#3b3b3b;border:1px solid #1a1a1a;border-right:0"></div>
<div class="t n tb" style="left:817px;top:210px;transform:scaleX(0.863);transform-origin:0 0">Zones:</div>
<div class="t n tb" style="left:817px;top:234px;transform:scaleX(0.903);transform-origin:0 0">State:</div>
<div class="a sel" style="left:857px;top:207px"><div class="a" style="right:0;top:0;width:15px;height:17px;background:#5a5a5a"></div><div class="dd" style="right:4px;top:7px;border-top-color:#ddd"></div></div>
<div class="a sel" style="left:857px;top:231px"><div class="a" style="right:0;top:0;width:15px;height:17px;background:#5a5a5a"></div><div class="dd" style="right:4px;top:7px;border-top-color:#ddd"></div></div>
<div class="t n tb" style="left:859px;top:210px;transform:scaleX(0.824);transform-origin:0 0">Main Frame</div>
<div class="t n tb" style="left:859px;top:234px;transform:scaleX(0.832);transform-origin:0 0">Normal</div>
<div class="a" style="left:797px;top:255px;width:199px;height:268px;background:#363636;border:1px solid #181818"></div>
<div class="a" style="left:798px;top:256px;width:16px;height:266px;background:#3a3a3a"></div>
<div class="a" style="left:798px;top:256px;width:181px;height:19px;background:#3a3a3a"></div><div class="t n pg-h" style="left:817px;top:259px;transform:scaleX(0.923);transform-origin:0 0">Background</div><div class="a tri-dw" style="left:955px;top:261px"></div><div class="a" style="left:814px;top:276px;width:110px;height:16px;background:#444"></div><div class="a" style="left:924px;top:276px;width:54px;height:16px;background:#404040"></div><div class="a tri-r2" style="left:817px;top:279px"></div><div class="t n pg-t" style="left:831px;top:278px;color:#7f8595;transform:scaleX(0.842);transform-origin:0 0">Background</div><div class="a" style="left:798px;top:292px;width:181px;height:20px;background:#3a3a3a"></div><div class="t n pg-h" style="left:817px;top:296px;transform:scaleX(0.921);transform-origin:0 0">Borders</div><div class="a tri-dw" style="left:955px;top:297px"></div><div class="a" style="left:814px;top:313px;width:110px;height:16px;background:#565656"></div><div class="a" style="left:924px;top:313px;width:54px;height:16px;background:#404040"></div><div class="a tri-d2" style="left:817px;top:316px"></div><div class="t n pg-t" style="left:831px;top:315px;color:#fff;transform:scaleX(0.850);transform-origin:0 0">Borders</div><div class="a" style="left:814px;top:330px;width:110px;height:18px;background:#444"></div><div class="a" style="left:924px;top:330px;width:54px;height:18px;background:#404040"></div><div class="t n pg-t" style="left:846px;top:333px;color:#d4d4d4;transform:scaleX(0.827);transform-origin:0 0">Color</div><div class="a" style="left:814px;top:349px;width:110px;height:18px;background:#444"></div><div class="a" style="left:924px;top:349px;width:54px;height:18px;background:#404040"></div><div class="t n pg-t" style="left:846px;top:352px;color:#d4d4d4;transform:scaleX(0.843);transform-origin:0 0">Style</div><div class="a" style="left:814px;top:368px;width:110px;height:16px;background:#444"></div><div class="a" style="left:924px;top:368px;width:54px;height:16px;background:#404040"></div><div class="a tri-r2" style="left:832px;top:371px"></div><div class="t n pg-t" style="left:846px;top:370px;color:#d4d4d4;transform:scaleX(0.825);transform-origin:0 0">Thickness</div><div class="a" style="left:814px;top:385px;width:110px;height:16px;background:#444"></div><div class="a" style="left:924px;top:385px;width:54px;height:16px;background:#404040"></div><div class="a tri-r2" style="left:817px;top:388px"></div><div class="t n pg-t" style="left:831px;top:387px;color:#d4d4d4;transform:scaleX(0.873);transform-origin:0 0">Bottom border</div><div class="a" style="left:814px;top:402px;width:110px;height:16px;background:#444"></div><div class="a" style="left:924px;top:402px;width:54px;height:16px;background:#404040"></div><div class="a tri-r2" style="left:817px;top:405px"></div><div class="t n pg-t" style="left:831px;top:404px;color:#d4d4d4;transform:scaleX(0.903);transform-origin:0 0">Left border</div><div class="a" style="left:814px;top:419px;width:110px;height:16px;background:#444"></div><div class="a" style="left:924px;top:419px;width:54px;height:16px;background:#404040"></div><div class="a tri-r2" style="left:817px;top:422px"></div><div class="t n pg-t" style="left:831px;top:421px;color:#d4d4d4;transform:scaleX(0.870);transform-origin:0 0">Right border</div><div class="a" style="left:814px;top:436px;width:110px;height:16px;background:#444"></div><div class="a" style="left:924px;top:436px;width:54px;height:16px;background:#404040"></div><div class="a tri-r2" style="left:817px;top:439px"></div><div class="t n pg-t" style="left:831px;top:438px;color:#d4d4d4;transform:scaleX(0.887);transform-origin:0 0">Top border</div><div class="a" style="left:798px;top:452px;width:181px;height:21px;background:#3a3a3a"></div><div class="t n pg-h" style="left:817px;top:456px;transform:scaleX(0.918);transform-origin:0 0">Dimensions</div><div class="a tri-dw" style="left:955px;top:458px"></div><div class="a" style="left:814px;top:474px;width:110px;height:16px;background:#444"></div><div class="a" style="left:924px;top:474px;width:54px;height:16px;background:#404040"></div><div class="a tri-r2" style="left:817px;top:477px"></div><div class="t n pg-t" style="left:831px;top:476px;color:#d4d4d4;transform:scaleX(0.883);transform-origin:0 0">Height</div><div class="t pg-t" style="left:927px;top:476px;font-weight:bold;color:#ccc;transform:scaleX(1.019);transform-origin:0 0">auto</div><div class="a" style="left:814px;top:491px;width:110px;height:16px;background:#444"></div><div class="a" style="left:924px;top:491px;width:54px;height:16px;background:#404040"></div><div class="a tri-r2" style="left:817px;top:494px"></div><div class="t n pg-t" style="left:831px;top:493px;color:#d4d4d4;transform:scaleX(0.870);transform-origin:0 0">Max Height</div><div class="a" style="left:814px;top:508px;width:110px;height:14px;background:#444"></div><div class="a" style="left:924px;top:508px;width:54px;height:14px;background:#404040"></div><div class="a tri-r2" style="left:817px;top:511px"></div><div class="t n pg-t" style="left:831px;top:509px;color:#d4d4d4;transform:scaleX(0.871);transform-origin:0 0">Max Width</div>
<div class="a" style="left:978px;top:256px;width:17px;height:266px;background:#303030"></div>
<div class="a" style="left:981px;top:273px;width:11px;height:53px;background:#aaa;border-radius:3px"></div>
<div class="a tri-u" style="left:983px;top:260px;border-bottom-color:#e0e0e0"></div>
<div class="a tri-d" style="left:983px;top:511px;border-top-color:#e0e0e0"></div>
<div class="a" style="left:929px;top:334px;width:22px;height:10px;border:1px solid #d8d8d8;background:#3a3a3a"></div>
<div class="a" style="left:888px;top:524px;width:15px;height:1px;background:#777;box-shadow:0 2px 0 #777,0 4px 0 #777"></div>
<div class="a" style="left:796px;top:530px;width:200px;height:82px;background:#fff"></div>
<div class="t" style="left:827px;top:542px;font-size:12px;font-weight:bold;color:#000;transform:scaleX(0.981);transform-origin:0 0">- Borders</div>
<div class="t n3" style="left:806px;top:561px;font-size:12px;color:#000;transform:scaleX(0.966);transform-origin:0 0">[border]</div>
<div class="t n3" style="left:806px;top:575px;font-size:12px;color:#000;transform:scaleX(0.915);transform-origin:0 0">All styles applied to the border of the</div>
<div class="t n3" style="left:806px;top:589px;font-size:12px;color:#000;transform:scaleX(0.937);transform-origin:0 0">object.</div>
<div class="a" style="left:783px;top:619px;width:217px;height:6px;background:#2a2a2a;border-top:1px solid #161616"></div>
<svg class="a" style="left:799px;top:153px" width="14" height="14"><use href="#savep"/></svg><svg class="a" style="left:830px;top:153px" width="16" height="14"><use href="#eraser"/></svg><svg class="a" style="left:865px;top:152px" width="10" height="15"><use href="#wiz"/></svg><svg class="a" style="left:799px;top:210px" width="13" height="12"><use href="#pencilz"/></svg><svg class="a" style="left:797px;top:231px" width="16" height="15"><use href="#flame"/></svg><svg class="a" style="left:806px;top:540px" width="15" height="15"><use href="#help"/></svg></div>
<!-- POPUP -->
<svg width="0" height="0" style="position:absolute"><defs>
<symbol id="paint" viewBox="0 0 14 14"><path d="M0 2.500L8.500 0l4.200 5.500-6 5.500z" fill="#1a7ee0"/><path d="M1.500 3L7 1.300l1.200 2.500-4.200 2.500z" fill="#52acf8"/><circle cx="9.300" cy="8" r="3.300" fill="#c4c8cc" stroke="#8c9094" stroke-width=".7"/><circle cx="8.500" cy="7.200" r="1.400" fill="#eceef0"/><path d="M10.300 8.500l2 4.800" stroke="#2a84e8" stroke-width="1.800" stroke-linecap="round"/></symbol>
<symbol id="pg" viewBox="0 0 12 14"><path d="M.5.5h8l3 3v10H.5z" fill="#fdfdff" stroke="#3c62b8"/><path d="M8.500.500v3h3" fill="#c8d8f0" stroke="#3c62b8" stroke-width=".7"/></symbol>
<symbol id="pgm" viewBox="0 0 12 14"><use href="#pg"/><rect x="2" y="5" width="4" height="2" fill="#1848c0"/><rect x="7" y="5" width="3" height="2" fill="#2868e0"/><path d="M4 7l3 2" stroke="#1848c0"/><rect x="6" y="8" width="4" height="3" fill="#1848c0"/><rect x="2" y="10" width="3" height="2" fill="#a8b8e0"/></symbol>
<symbol id="pgd" viewBox="0 0 12 14"><use href="#pg"/><rect x="2" y="5" width="8" height="1.500" fill="#5878d0"/><rect x="2" y="7.500" width="8" height="4.500" fill="#b8c4ec"/><rect x="3" y="8.500" width="3" height="2.500" fill="#8898d8"/></symbol>
<symbol id="pgg" viewBox="0 0 14 16"><path d="M.5.5h8l3 3v11H.5z" fill="#fdfdff" stroke="#3c62b8"/><path d="M8.500.500v3h3" fill="#c8d8f0" stroke="#3c62b8" stroke-width=".7"/><rect x="2" y="5" width="6" height="1" fill="#98a8c8"/><rect x="2" y="7" width="7" height="1" fill="#98a8c8"/><rect x="2" y="9" width="3" height="1" fill="#98a8c8"/><circle cx="9.500" cy="11.500" r="3.300" fill="#2a78d8"/><path d="M7.500 10.500q2-2 3.500 0t-1 3.500q-2-1-2.500-3.500" fill="#48b838"/></symbol>
<symbol id="folder" viewBox="0 0 17 15"><path d="M1 5l5-3v11l-5-1z" fill="#e8b838" stroke="#a87808" stroke-width=".6"/><path d="M5 2l10-1v12l-10 1z" fill="#fce888" stroke="#b88818" stroke-width=".6"/><path d="M7 1l8 0v11" fill="none" stroke="#fff8c8" stroke-width="1"/></symbol>
<symbol id="home" viewBox="0 0 16 14"><path d="M1 7l7-6 7 6v1h-2v5H3V8H1z" fill="#f4f6fa" stroke="#9098a8" stroke-width=".6"/><path d="M0.500 7L8 .5 15.500 7l-1 1L8 2.500 1.500 8z" fill="#2a88e8"/><path d="M2 3l5-2.500 3 1-6 5z" fill="#58b0f8"/><rect x="9" y="8" width="3" height="5" fill="#2868c8"/><rect x="4.500" y="8" width="3" height="3" fill="#98b8e8"/></symbol>
<symbol id="smap" viewBox="0 0 14 15"><rect x=".5" y=".5" width="13" height="14" rx="1.500" fill="#f0f0ee" stroke="#b0b0a8"/><rect x="2" y="3" width="10" height="1" fill="#c8c8c0"/><rect x="2" y="5" width="7" height="1" fill="#c8c8c0"/><rect x="2" y="7" width="9" height="1" fill="#c8c8c0"/><rect x="2" y="10" width="2" height="3" fill="#222"/><rect x="6" y="10" width="2" height="3" fill="#222"/><rect x="10" y="10" width="2" height="3" fill="#222"/></symbol>
<symbol id="zone" viewBox="0 0 16 16"><rect x=".5" y=".5" width="15" height="15" fill="none" stroke="#2848c8" stroke-dasharray="1.500 1"/><rect x="3" y="4" width="10" height="7" fill="#1858d8"/><rect x="4" y="5" width="6" height="3" fill="#58a0f8"/></symbol>
<symbol id="txt" viewBox="0 0 16 16"><rect x=".5" y=".5" width="15" height="15" rx="2.500" fill="#f8f8fc" stroke="#88a0d8"/><rect x="3" y="3.500" width="10" height="1.500" fill="#e85818"/><rect x="3" y="6.500" width="6" height="1.500" fill="#f0a030"/><rect x="3" y="9.500" width="9" height="1.500" fill="#e85818"/><rect x="3" y="12" width="5" height="1.200" fill="#f0a030"/></symbol>
<symbol id="refresh" viewBox="0 0 16 16"><path d="M2.500 7A5.500 5 0 0 1 12 4" fill="none" stroke="#1870e0" stroke-width="2.600"/><path d="M13.500 9A5.500 5 0 0 1 4 12" fill="none" stroke="#1870e0" stroke-width="2.600"/><path d="M9.500 1l5 .5-1 5z" fill="#1870e0"/><path d="M6.500 15l-5-.5 1-5z" fill="#1870e0"/><path d="M3 6.500A5 4.500 0 0 1 11.500 4" fill="none" stroke="#78c0ff" stroke-width="1"/><path d="M13 9.500A5 4.500 0 0 1 4.500 12" fill="none" stroke="#78c0ff" stroke-width="1"/></symbol>
<symbol id="plusg" viewBox="0 0 16 16"><circle cx="8" cy="8" r="7.500" fill="#a4a4a4" stroke="#8c8c8c"/><path d="M8 3.500v9M3.500 8h9" stroke="#c4c4c4" stroke-width="3"/></symbol>
<symbol id="xg" viewBox="0 0 16 16"><circle cx="8" cy="8" r="7.500" fill="#a4a4a4" stroke="#8c8c8c"/><path d="M5 5l6 6M11 5l-6 6" stroke="#c4c4c4" stroke-width="2.600"/></symbol>
<symbol id="xr" viewBox="0 0 16 16"><circle cx="8" cy="8" r="7.500" fill="#e02018" stroke="#981008"/><ellipse cx="8" cy="5" rx="5.500" ry="3" fill="#f87868" opacity=".6"/><path d="M5 5l6 6M11 5l-6 6" stroke="#fff" stroke-width="2.600"/></symbol>
<symbol id="upg" viewBox="0 0 16 16"><circle cx="8" cy="8" r="7.500" fill="#38a828" stroke="#186810"/><ellipse cx="8" cy="5" rx="5.500" ry="3" fill="#88e070" opacity=".6"/><path d="M8 13V5M4.500 8L8 4l3.500 4" fill="none" stroke="#fff" stroke-width="2.200"/></symbol>
<symbol id="globe" viewBox="0 0 16 16"><circle cx="8" cy="7" r="6.500" fill="#2880e0"/><path d="M4 3q3-2 5 0t3 3q-2 3-5 2T4 3" fill="#48c038"/><path d="M2 12q2-3 6-3t6 3q-1 3-6 3t-6-3" fill="#e84818"/><path d="M5 12h6" stroke="#f8d040" stroke-width="1.500"/></symbol>
<symbol id="copy" viewBox="0 0 16 16"><path d="M5.500.5h7l3 3v8h-10z" fill="#e8ecf8" stroke="#4868b8"/><path d="M.5 3.500h8l2 2v10h-10z" fill="#fdfdff" stroke="#4868b8"/><rect x="2" y="7" width="6" height="1.500" fill="#6080d0"/><rect x="2" y="10" width="6" height="3.500" fill="#b8c4ec"/></symbol>
<symbol id="zoomi" viewBox="0 0 16 16"><path d="M9 9l5.500 5.500" stroke="#e8a030" stroke-width="2.600"/><path d="M9 9l5.500 5.500" stroke="#e8e8e8" stroke-width="1"/><circle cx="6" cy="6" r="5" fill="#e8f4ff" stroke="#888" stroke-width="1.200"/><path d="M6 3v6M3 6h6" stroke="#18a018" stroke-width="2"/></symbol>
<symbol id="pencilz" viewBox="0 0 18 16"><rect x="1" y="5" width="9" height="7" fill="#2868d8" transform="rotate(-20 5 8)"/><path d="M5 13l9-10 3 2-9 10-4 1z" fill="#58b838" stroke="#287018" stroke-width=".6"/><path d="M13 4l2-2 3 2-2 2z" fill="#e83828"/><path d="M5 13l-1 3 4-1z" fill="#e8c890"/></symbol>
<symbol id="flag" viewBox="0 0 17 13"><rect width="17" height="13" fill="#f0f0f0"/><path d="M0 .5h17M0 2.500h17M0 4.500h17M0 6.500h17M0 8.500h17M0 10.500h17" stroke="#e84828" stroke-width="1"/><path d="M0 12.500h17" stroke="#f0a040" stroke-width="1"/><rect width="8" height="7" fill="#3858b8"/><path d="M1 1.500h6M1 3.500h6M1 5.500h6" stroke="#98a8e0" stroke-width=".6" stroke-dasharray="1 1"/></symbol>
<symbol id="mailf" viewBox="0 0 22 22"><rect x=".5" y=".5" width="21" height="21" rx="3" fill="#e8f0fc" stroke="#88a8e0"/><rect x="4" y="4" width="12" height="14" fill="#fdfdfd" stroke="#889"/><path d="M7 5h8v8l-3-3-2 3z" fill="#38b028"/><path d="M9 5l2 5 2-3 2 5" stroke="#fff" stroke-width="1" fill="none"/><rect x="10" y="13" width="9" height="5" fill="#d0d8e8" stroke="#778"/></symbol>
<symbol id="code" viewBox="0 0 17 16"><rect x=".5" y="1.500" width="13" height="14" rx="1.500" fill="#f4f8ff" stroke="#5888d8"/><rect x="2.500" y="4" width="7" height="1" fill="#88a8e0"/><rect x="2.500" y="7" width="5" height="1" fill="#88a8e0"/><rect x="2.500" y="10" width="4" height="1" fill="#88a8e0"/><path d="M6 12l7-9 2.500 2-7 9-3.500 1z" fill="#48b030" stroke="#287018" stroke-width=".5"/><path d="M13 3l1.500-2 2.500 2-1.500 2z" fill="#e83828"/></symbol>
<symbol id="src" viewBox="0 0 17 17"><rect x=".5" y=".5" width="16" height="16" rx="1.500" fill="#18283c" stroke="#48a0e8"/><rect x="1" y="1" width="15" height="3" fill="#58a8f0"/><path d="M3 7h2M6 7h3M3 9.500h2M6 9.500h2M3 12h3" stroke="#48d848" stroke-width="1"/><path d="M10 8h5v7h-5z" fill="#48c838"/><path d="M11.500 10l2.500 1.500-2.500 1.500z" fill="#fff"/></symbol>
<symbol id="perf" viewBox="0 0 14 17"><circle cx="7" cy="4.500" r="3.500" fill="#f8c898"/><path d="M3.500 4q0-4 3.500-4t3.500 4q-2-2-3.500-2t-3.500 2" fill="#b86828"/><path d="M.5 16q0-7 6.500-7t6.500 7z" fill="#f8f8f8" stroke="#c8c8c8" stroke-width=".5"/><path d="M5.500 9l1.500 4 1.500-4" fill="#e8e8f0" stroke="#a8a8b8" stroke-width=".5"/><path d="M7 12v4" stroke="#e02020" stroke-width="1.500"/></symbol>
<symbol id="savep" viewBox="0 0 16 16"><path d="M.5.5h13l2 2v13H.5z" fill="#1858c8" stroke="#0c3080"/><rect x="3" y="1" width="9" height="5" fill="#f0f4fc"/><rect x="3" y="2" width="9" height="1" fill="#88a8e0"/><rect x="2.500" y="9" width="7" height="6" fill="#d0d8e8"/><rect x="3.500" y="10" width="2" height="4" fill="#1858c8"/><circle cx="12" cy="12" r="3.800" fill="#30a828" stroke="#fff" stroke-width=".6"/><path d="M12 9.800v4.400M9.800 12h4.400" stroke="#fff" stroke-width="1.400"/></symbol>
<symbol id="eraser" viewBox="0 0 18 16"><g transform="rotate(-32 9 8)"><rect x="1.500" y="3.500" width="15" height="9" rx="2.500" fill="#5860c8"/><rect x="1.500" y="3" width="15" height="7.500" rx="2.500" fill="#f6f6f6"/><path d="M4 3h5.500v7.500H4a2.500 2.500 0 0 1-2.500-2.500v-2.500A2.500 2.500 0 0 1 4 3z" fill="#8c94f4"/><path d="M1.500 8.500v1.500a2.500 2.500 0 0 0 2.500 2.500h5.500V10.500H4a2.500 2.500 0 0 1-2.500-2z" fill="#5860c8"/><path d="M9.500 10.500h4.500a2.500 2.500 0 0 0 2.500-2.500v2a2.500 2.500 0 0 1-2.500 2.500H9.500z" fill="#b8b8c4"/></g></symbol>
<symbol id="wiz" viewBox="0 0 12 17"><path d="M3 1l4 2-1 5-3 0z" fill="#4858b8"/><circle cx="6" cy="8" r="2.600" fill="#f8e040"/><path d="M1 15c0-4 3-5 5-5s5 1 5 5z" fill="#5060b8"/><ellipse cx="6" cy="15" rx="5" ry="1.500" fill="#38408a"/></symbol>
<symbol id="flame" viewBox="0 0 18 17"><path d="M1 1l7 4-1-4 6 6 1-2 3 11-8-1 2-2-7-4 3-1z" fill="#f06810"/><path d="M8 7l5 5 1-1 1 4-5-.5 1.500-1.500z" fill="#ffd830"/><path d="M1 1l7 4-1-4" fill="none" stroke="#c82808" stroke-width=".8"/></symbol>
<symbol id="dropper" viewBox="0 0 16 16"><path d="M2 14l1-3 6-6 2 2-6 6z" fill="#48a0f0" stroke="#1860b8" stroke-width=".6"/><path d="M8 4l3-3q2-1 3 1t-1 3l-3 3z" fill="#e8a020" stroke="#a86808" stroke-width=".6"/><path d="M7.500 4.500l4 4" stroke="#c88818" stroke-width="1.500"/></symbol>
<symbol id="palette" viewBox="0 0 16 14"><path d="M8 .5C3.500.5.5 3.500.5 7s3 6.500 7.500 6.500c2 0 2-1.500 1.500-2.500s0-2 1.500-2h2.500c1.500 0 2-1 2-2C15.500 3.500 12.500.5 8 .5z" fill="#f0ece4" stroke="#a8a098" stroke-width=".7"/><circle cx="4" cy="5" r="1.500" fill="#e82020"/><circle cx="7" cy="3" r="1.500" fill="#f0c020"/><circle cx="11" cy="4" r="1.500" fill="#28a828"/><circle cx="4" cy="9" r="1.500" fill="#2868e0"/></symbol>
<symbol id="wheel" viewBox="0 0 16 16"><circle cx="8" cy="8" r="7.500" fill="#333"/><path d="M8 8L8 1.500A6.500 6.500 0 0 1 13.630 4.750z" fill="#f8e020"/><path d="M8 8L13.630 4.750A6.500 6.500 0 0 1 13.630 11.250z" fill="#38c038"/><path d="M8 8L13.630 11.250A6.500 6.500 0 0 1 8 14.500z" fill="#20b8e8"/><path d="M8 8L8 14.500A6.500 6.500 0 0 1 2.370 11.250z" fill="#3048e0"/><path d="M8 8L2.370 11.250A6.500 6.500 0 0 1 2.370 4.750z" fill="#c028d0"/><path d="M8 8L2.370 4.750A6.500 6.500 0 0 1 8 1.500z" fill="#f02828"/><circle cx="8" cy="8" r="2" fill="#fff" opacity=".55"/></symbol>
<symbol id="help" viewBox="0 0 16 16"><circle cx="5.500" cy="5.500" r="4.800" fill="#e8ecf4" stroke="#8890a0" stroke-width=".8"/><path d="M4 4.500q0-1.500 1.500-1.500t1.500 1.500q0 1-1.500 1.500v1" fill="none" stroke="#4868a8" stroke-width="1.200"/><circle cx="10.500" cy="10.500" r="4.800" fill="#f0f2f8" stroke="#8890a0" stroke-width=".8"/><path d="M10.500 8v3M10.500 12.500v1" stroke="#4868a8" stroke-width="1.300"/></symbol>
</defs></svg><div id="popup" class="a" style="left:537px;top:50px;width:241px;height:386px">
<div class="a" style="left:0;top:0;width:241px;height:386px;background:#a0a0a0;border:2px solid #1c1c1c;border-right-width:1px;border-bottom-width:1px;box-shadow:1px 1px 0 #555"></div>
<div class="a" style="left:2px;top:2px;width:238px;height:25px;background:linear-gradient(#585858,#484848);border-bottom:1px solid #666"></div>
<div class="t" style="left:8px;top:8px;font-size:12.5px;font-weight:bold;color:#d6d6d6;transform:scaleX(0.913);transform-origin:0 0">All groups</div>
<div class="a" style="left:223px;top:28px;width:17px;height:265px;background:#2c2c2c"></div>
<div class="a tri-u" style="left:229px;top:34px;border-bottom-color:#555"></div>
<div class="a tri-d" style="left:229px;top:281px;border-top-color:#555"></div>
<div class="a hl" style="left:2px;top:48px;width:221px"></div>
<div class="a hl" style="left:2px;top:92px;width:221px"></div>
<div class="a hl" style="left:2px;top:246px;width:221px"></div>
<div class="a hl" style="left:2px;top:293px;width:238px"></div>
<div class="t n" style="left:7px;top:78px;font-size:12.5px;color:#26355a;transform:scaleX(0.902);transform-origin:0 0">Palette : Default</div>
<div class="a sw" style="left:5px;top:53px;background:#e01a1a"></div><div class="a sw" style="left:27px;top:53px;background:#ee1111"></div><div class="a sw" style="left:49px;top:53px;background:#f8b51c"></div><div class="a sw" style="left:71px;top:53px;background:#ffe000"></div><div class="a sw" style="left:93px;top:53px;background:#8ad84a"></div><div class="a sw" style="left:115px;top:53px;background:#00b050"></div><div class="a sw" style="left:137px;top:53px;background:#00b0f0"></div><div class="a sw" style="left:159px;top:53px;background:#1272d2"></div><div class="a sw" style="left:181px;top:53px;background:#13236a"></div><div class="a sw" style="left:203px;top:53px;background:#7030b0"></div><div class="a sw" style="left:5px;top:97px;background:#FFFFFF"></div><div class="a sw" style="left:27px;top:97px;background:#000000"></div><div class="a sw" style="left:49px;top:97px;background:#EEECE8"></div><div class="a sw" style="left:71px;top:97px;background:#1F407D"></div><div class="a sw" style="left:93px;top:97px;background:#4F81C8"></div><div class="a sw" style="left:115px;top:97px;background:#C8504C"></div><div class="a sw" style="left:137px;top:97px;background:#8FC850"></div><div class="a sw" style="left:159px;top:97px;background:#8064A2"></div><div class="a sw" style="left:181px;top:97px;background:#4BA4D8"></div><div class="a sw" style="left:203px;top:97px;background:#F79646"></div><div class="a sw" style="left:5px;top:119px;background:#F4F4F2"></div><div class="a sw" style="left:27px;top:119px;background:#7F7F7F"></div><div class="a sw" style="left:49px;top:119px;background:#DDDDC3"></div><div class="a sw" style="left:71px;top:119px;background:#C6DCF2"></div><div class="a sw" style="left:93px;top:119px;background:#DEEEF6"></div><div class="a sw" style="left:115px;top:119px;background:#F2DED8"></div><div class="a sw" style="left:137px;top:119px;background:#EEEEE4"></div><div class="a sw" style="left:159px;top:119px;background:#E8ECEE"></div><div class="a sw" style="left:181px;top:119px;background:#DEEEF8"></div><div class="a sw" style="left:203px;top:119px;background:#FDEADA"></div><div class="a sw" style="left:5px;top:141px;background:#DADADA"></div><div class="a sw" style="left:27px;top:141px;background:#595959"></div><div class="a sw" style="left:49px;top:141px;background:#C8C090"></div><div class="a sw" style="left:71px;top:141px;background:#8DBBE8"></div><div class="a sw" style="left:93px;top:141px;background:#BCC8EC"></div><div class="a sw" style="left:115px;top:141px;background:#ECC8B4"></div><div class="a sw" style="left:137px;top:141px;background:#D7E0BC"></div><div class="a sw" style="left:159px;top:141px;background:#CCCCDD"></div><div class="a sw" style="left:181px;top:141px;background:#B7D8F0"></div><div class="a sw" style="left:203px;top:141px;background:#F8D5BC"></div><div class="a sw" style="left:5px;top:163px;background:#C4C4C4"></div><div class="a sw" style="left:27px;top:163px;background:#3F3F3F"></div><div class="a sw" style="left:49px;top:163px;background:#988850"></div><div class="a sw" style="left:71px;top:163px;background:#4C8CD8"></div><div class="a sw" style="left:93px;top:163px;background:#90BCE8"></div><div class="a sw" style="left:115px;top:163px;background:#E09C98"></div><div class="a sw" style="left:137px;top:163px;background:#C3D090"></div><div class="a sw" style="left:159px;top:163px;background:#B2AAD0"></div><div class="a sw" style="left:181px;top:163px;background:#90C4E8"></div><div class="a sw" style="left:203px;top:163px;background:#F8B890"></div><div class="a sw" style="left:5px;top:185px;background:#A8A8A8"></div><div class="a sw" style="left:27px;top:185px;background:#262626"></div><div class="a sw" style="left:49px;top:185px;background:#494429"></div><div class="a sw" style="left:71px;top:185px;background:#17367D"></div><div class="a sw" style="left:93px;top:185px;background:#366092"></div><div class="a sw" style="left:115px;top:185px;background:#953734"></div><div class="a sw" style="left:137px;top:185px;background:#76923C"></div><div class="a sw" style="left:159px;top:185px;background:#5F497A"></div><div class="a sw" style="left:181px;top:185px;background:#3080B8"></div><div class="a sw" style="left:203px;top:185px;background:#E36C09"></div><div class="a sw" style="left:5px;top:207px;background:#808080"></div><div class="a sw" style="left:27px;top:207px;background:#0C0C0C"></div><div class="a sw" style="left:49px;top:207px;background:#1D1B1B"></div><div class="a sw" style="left:71px;top:207px;background:#15244E"></div><div class="a sw" style="left:93px;top:207px;background:#244071"></div><div class="a sw" style="left:115px;top:207px;background:#732C2C"></div><div class="a sw" style="left:137px;top:207px;background:#4F6128"></div><div class="a sw" style="left:159px;top:207px;background:#444048"></div><div class="a sw" style="left:181px;top:207px;background:#285868"></div><div class="a sw" style="left:203px;top:207px;background:#974806"></div><div class="a sw" style="left:5px;top:251px;background:transparent"></div><svg class="a" style="left:5px;top:273px" width="14" height="14"><use href="#paint"/></svg><div class="a sw" style="left:27px;top:251px;background:transparent"></div><svg class="a" style="left:27px;top:273px" width="14" height="14"><use href="#paint"/></svg><div class="a sw" style="left:49px;top:251px;background:transparent"></div><svg class="a" style="left:49px;top:273px" width="14" height="14"><use href="#paint"/></svg><div class="a sw" style="left:71px;top:251px;background:transparent"></div><svg class="a" style="left:71px;top:273px" width="14" height="14"><use href="#paint"/></svg><div class="a sw" style="left:93px;top:251px;background:transparent"></div><svg class="a" style="left:93px;top:273px" width="14" height="14"><use href="#paint"/></svg><div class="a sw" style="left:115px;top:251px;background:transparent"></div><svg class="a" style="left:115px;top:273px" width="14" height="14"><use href="#paint"/></svg><div class="a sw" style="left:137px;top:251px;background:transparent"></div><svg class="a" style="left:137px;top:273px" width="14" height="14"><use href="#paint"/></svg><div class="a sw" style="left:159px;top:251px;background:transparent"></div><svg class="a" style="left:159px;top:273px" width="14" height="14"><use href="#paint"/></svg><div class="a sw" style="left:181px;top:251px;background:transparent"></div><svg class="a" style="left:181px;top:273px" width="14" height="14"><use href="#paint"/></svg><div class="a sw" style="left:203px;top:251px;background:transparent"></div><svg class="a" style="left:203px;top:273px" width="14" height="14"><use href="#paint"/></svg>
<div class="a" style="left:2px;top:294px;width:27px;height:91px;background:#a2a2a2"></div>
<svg class="a" style="left:6px;top:296px" width="16" height="16"><use href="#dropper"/></svg><svg class="a" style="left:6px;top:320px" width="16" height="14"><use href="#palette"/></svg><svg class="a" style="left:6px;top:341px" width="16" height="16"><use href="#wheel"/></svg><svg class="a" style="left:5px;top:364px" width="18" height="16"><use href="#eraser"/></svg><div class="t n mi" style="left:36px;top:298px;transform:scaleX(0.889);transform-origin:0 0">Eyedropper Tool</div>
<div class="t n mi" style="left:36px;top:320px;transform:scaleX(0.855);transform-origin:0 0">Palette</div>
<div class="t n mi" style="left:36px;top:343px;transform:scaleX(0.909);transform-origin:0 0">Color</div>
<div class="t n mi" style="left:36px;top:365px;transform:scaleX(0.886);transform-origin:0 0">Default</div>
<div class="a" style="left:227px;top:322px;width:0;height:0;border-top:4px solid transparent;border-bottom:4px solid transparent;border-left:5px solid #111"></div>
<div class="a" style="left:71px;top:340px;width:166px;height:20px;background:#474747;border:1px solid #141414"><div class="a" style="right:0;top:0;width:15px;height:18px;background:#5e5e5e"></div><div class="dd" style="right:4px;top:7px;border-top-color:#ddd"></div></div>
</div>
</body></html>
